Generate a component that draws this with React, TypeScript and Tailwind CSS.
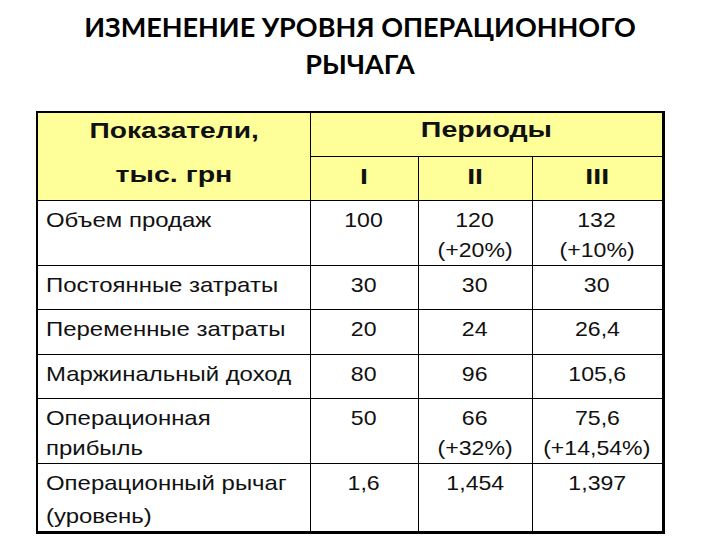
import React from "react";

// Таблица изменения уровня операционного рычага
const ROWS: { label: string[]; values: string[][]; h: string }[] = [
    { label: ["Объем продаж"], values: [["100"], ["120", "(+20%)"], ["132", "(+10%)"]], h: "h-[65px]" },
    { label: ["Постоянные затраты"], values: [["30"], ["30"], ["30"]], h: "h-[44px]" },
    { label: ["Переменные затраты"], values: [["20"], ["24"], ["26,4"]], h: "h-[45px]" },
    { label: ["Маржинальный доход"], values: [["80"], ["96"], ["105,6"]], h: "h-[44px]" },
    { label: ["Операционная", "прибыль"], values: [["50"], ["66", "(+32%)"], ["75,6", "(+14,54%)"]], h: "h-[65px]" },
    { label: ["Операционный рычаг", "(уровень)"], values: [["1,6"], ["1,454"], ["1,397"]], h: "h-[68px]" },
];

export default function App() {
    return (
        <div className="w-[720px] h-[540px] bg-white overflow-hidden">
            <h1 className="pt-[8px] text-center text-[27px] leading-[37px] font-bold text-black font-['Lato',sans-serif]">
                ИЗМЕНЕНИЕ УРОВНЯ ОПЕРАЦИОННОГО<br />РЫЧАГА
            </h1>

            <div className="ml-[36px] mt-[29px] w-[626px]">
                <table className="w-full table-fixed border-collapse border-2 border-r-[3px] border-b-[3px] border-black text-[#111] font-['Liberation_Sans',Arial,sans-serif]">
                    <colgroup>
                        <col className="w-[273px]" />
                        <col className="w-[108px]" />
                        <col className="w-[114px]" />
                        <col className="w-[131px]" />
                    </colgroup>
                    <thead className="bg-[#ffff99] text-[22px] leading-[25px] font-bold">
                        <tr className="h-[44px]">
                            <th rowSpan={2} className="border border-black align-top pt-[5px]">
                                <div><span className="inline-block scale-x-[1.28]">Показатели,</span></div>
                                <div className="mt-[19px]"><span className="inline-block scale-x-[1.3]">тыс. грн</span></div>
                            </th>
                            <th colSpan={3} className="border border-black align-top pt-[4px]">
                                <span className="inline-block scale-x-[1.3]">Периоды</span>
                            </th>
                        </tr>
                        <tr className="h-[44px]">
                            {["I", "II", "III"].map(n => (
                                <th key={n} className="border border-black align-top pt-[7px]">
                                    <span className="inline-block scale-x-[1.3]">{n}</span>
                                </th>
                            ))}
                        </tr>
                    </thead>
                    <tbody className="text-[21px] leading-[30px]">
                        {ROWS.map((row, i) => (
                            <tr key={i} className={row.h}>
                                <td className="border border-black align-top pt-[4px] pl-[8px]">
                                    {row.label.map((l, j) => (
                                        <div key={j} className={i === 5 && j === 1 ? "mt-[3px]" : ""}>
                                            <span className="inline-block origin-left scale-x-[1.14] whitespace-nowrap">{l}</span>
                                        </div>
                                    ))}
                                </td>
                                {row.values.map((v, k) => (
                                    <td key={k} className="border border-black align-top pt-[4px] text-center">
                                        {v.map((l, j) => (
                                            <div key={j}><span className="inline-block scale-x-[1.1] whitespace-nowrap">{l}</span></div>
                                        ))}
                                    </td>
                                ))}
                            </tr>
                        ))}
                    </tbody>
                </table>
            </div>
        </div>
    );
}
